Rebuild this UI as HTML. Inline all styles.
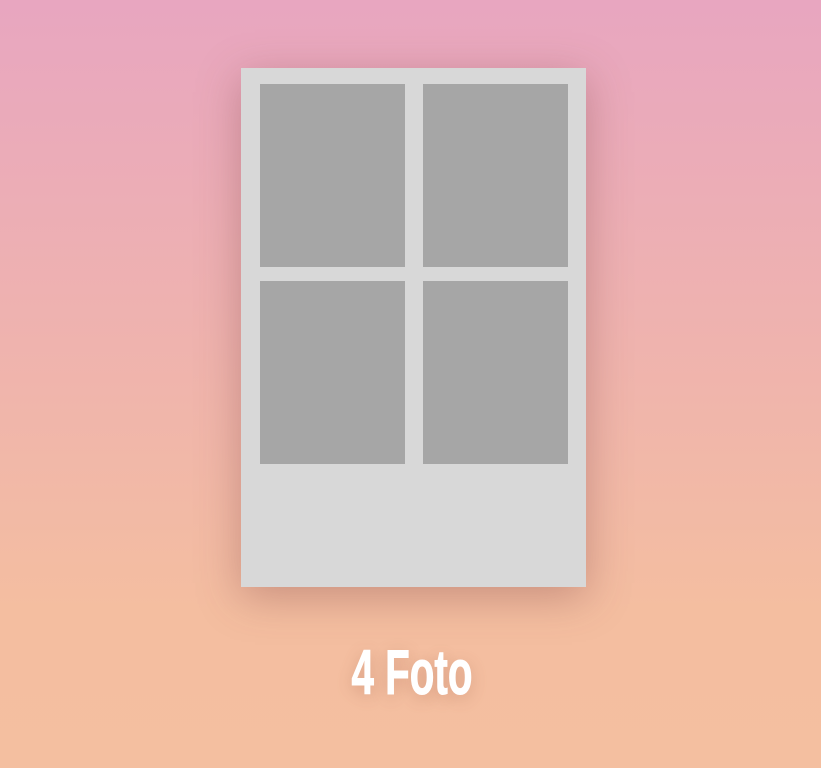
<!DOCTYPE html>
<html><head><style>
html,body{margin:0;padding:0;}
body{width:821px;height:768px;overflow:hidden;position:relative;background:linear-gradient(to bottom,#e8a6c0 0%,#efb3ae 45%,#f4bea0 80%,#f4bfa0 100%);}
.card{position:absolute;left:241px;top:68px;width:345px;height:519px;background:#d8d8d8;box-shadow:0 10px 40px rgba(120,60,60,0.35);}
.p{position:absolute;width:145px;height:183px;background:#a6a6a6;}
.t{position:absolute;left:262px;top:637px;width:300px;text-align:center;font-family:"Liberation Sans",sans-serif;font-weight:bold;font-size:63px;line-height:72px;color:#fff;transform:scaleX(0.64);transform-origin:150px 0;text-shadow:0 4px 20px rgba(150,80,60,0.3);-webkit-text-stroke:1px #fff;}
</style></head><body>
<div class="card">
<div class="p" style="left:19px;top:16px"></div>
<div class="p" style="left:182px;top:16px"></div>
<div class="p" style="left:19px;top:213px"></div>
<div class="p" style="left:182px;top:213px"></div>
</div>
<div class="t">4 Foto</div>
</body></html>
